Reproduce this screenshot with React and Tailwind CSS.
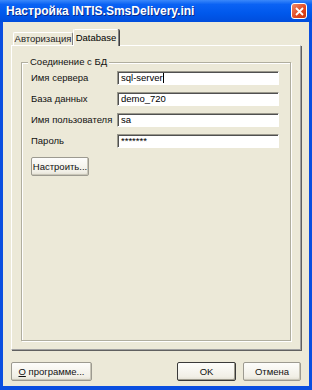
import React from "react";

const font = { fontFamily: '"Liberation Sans", Arial, sans-serif' };

function Field({ label, value, caret }) {
  return (
    <div className="flex items-center h-[14px]">
      <div className="w-[86px] text-[9.5px] text-[#111] leading-none">{label}</div>
      <div className="w-[162px] h-[14px] bg-white border-t border-l border-[#9a988c] border-r border-b border-r-white border-b-white shadow-[inset_1px_1px_0_#505050] flex items-center pl-[3px] text-[9.5px] leading-none text-black">
        <span>{value}</span>
        {caret && <span className="w-px h-[10px] bg-black"></span>}
      </div>
    </div>
  );
}

function Btn({ children, w, def }) {
  return (
    <div
      className={
        "h-[19px] flex items-center justify-center text-[9.5px] leading-none text-[#111] rounded-[2px] bg-[linear-gradient(#fdfdfb,#f1efe6_80%,#e3e0d4)] " +
        (def
          ? "border border-[#3a3a3a] shadow-[inset_-1px_-1px_0_#9d9a8c]"
          : "border border-[#9c9a90] shadow-[inset_-1px_-1px_0_#c9c6b8]")
      }
      style={{ width: w }}
    >
      {children}
    </div>
  );
}

export default function App() {
  return (
    <div className="w-[312px] h-[390px] bg-[#0a4ee0] flex flex-col" style={font}>
      <div className="h-[22px] flex items-center pl-[6px] pr-[5px] bg-[linear-gradient(#3a88fa_0%,#0a62f4_20%,#0058ec_60%,#004ddc_100%)]">
        <div className="flex-1 text-white font-bold text-[12px] leading-none [text-shadow:1px_1px_0_#0a2a8a]">
          Настройка INTIS.SmsDelivery.ini
        </div>
        <div className="w-[16px] h-[16px] rounded-[3px] border border-white bg-[linear-gradient(135deg,#f08a6a,#e0461f_60%,#c8380f)] flex items-center justify-center">
          <svg width="9" height="9" viewBox="0 0 9 9">
            <path d="M1 1 L8 8 M8 1 L1 8" stroke="white" strokeWidth="1.8" />
          </svg>
        </div>
      </div>
      <div className="flex-1 mx-[3px] mb-[4px] bg-[#ECE9D8] flex flex-col px-[8px] pt-[7px]">
        <div className="flex items-end h-[16px] relative z-10">
          <div className="h-[13px] w-[60px] ml-[2px] border-t border-l border-white border-r border-r-[#808080] flex items-center justify-center text-[9.5px] leading-none text-[#222] bg-[#ECE9D8] rounded-t-[2px]">
            Авторизация
          </div>
          <div className="h-[17px] -mb-px w-[46px] border-t border-l border-white border-r border-r-[#808080] shadow-[1px_0_0_#404040] flex items-center justify-center text-[9.5px] leading-none text-black bg-[#ECE9D8] rounded-t-[2px]">
            Database
          </div>
        </div>
        <div className="h-[305px] border-t border-l border-white border-r border-b border-r-[#a0a0a0] border-b-[#a0a0a0] shadow-[1px_1px_0_#606060] px-[9px] pt-[16px] pb-[8px] flex flex-col">
          <div className="relative flex-1 border border-[#b0ae9f] shadow-[1px_1px_0_white,inset_1px_1px_0_white] pl-[9px] pt-[8px] flex flex-col gap-[7px]">
            <div className="absolute -top-[6px] left-[6px] px-[2px] bg-[#ECE9D8] text-[9.5px] leading-none text-[#111]">
              Соединение с БД
            </div>
            <Field label="Имя сервера" value="sql-server" caret />
            <Field label="База данных" value="demo_720" />
            <Field label="Имя пользователя" value="sa" />
            <Field label="Пароль" value="*******" />
            <div className="mt-[2px]">
              <Btn w="58px">Настроить...</Btn>
            </div>
          </div>
        </div>
        <div className="flex items-center mt-[12px]">
          <Btn w="81px">
            <span className="underline">О</span>&nbsp;программе...
          </Btn>
          <div className="flex-1"></div>
          <Btn w="59px" def>OK</Btn>
          <div className="w-[7px]"></div>
          <Btn w="58px">Отмена</Btn>
        </div>
      </div>
    </div>
  );
}
